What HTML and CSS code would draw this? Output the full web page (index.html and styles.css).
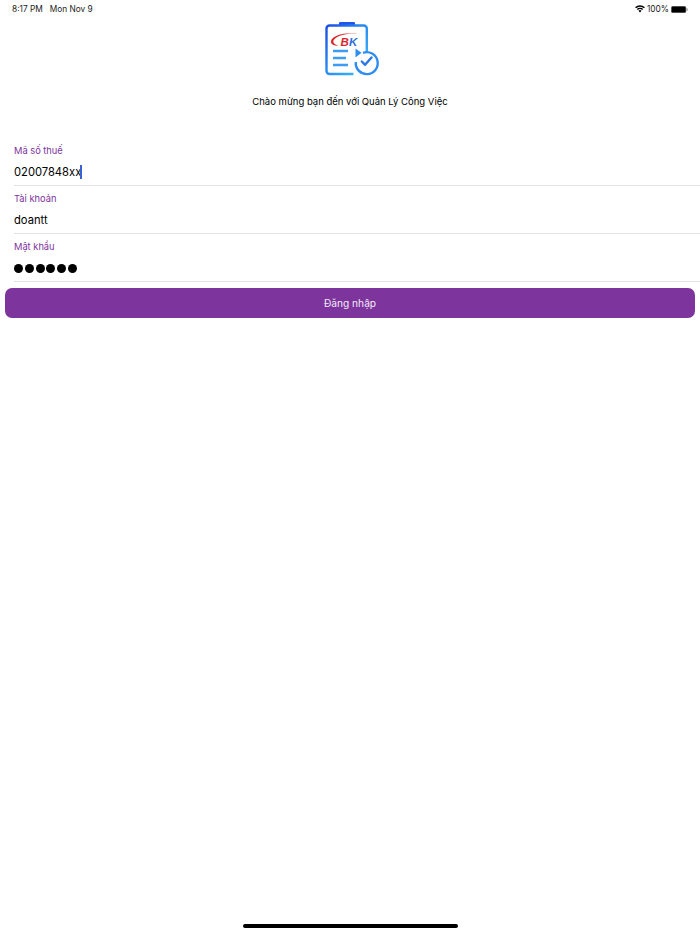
FILE: index.html
```html
<!DOCTYPE html>
<html lang="vi">
<head>
<meta charset="utf-8">
<title>Quản Lý Công Việc</title>
<link rel="stylesheet" href="styles.css">
</head>
<body>
<div class="screen">
  <header class="status">
    <div class="status-left"><span>8:17 PM</span><span>Mon Nov 9</span></div>
    <div class="status-right">
      <svg class="wifi" viewBox="0 0 12 9" width="10" height="7.500"><path d="M6 9 4.200 7a2.600 2.600 0 0 1 3.600 0Z" fill="#000"/><path d="M3.300 6 2.200 4.800a5.400 5.400 0 0 1 7.600 0L8.700 6a3.900 3.900 0 0 0-5.400 0Z" fill="#000"/><path d="M1.300 3.900.1 2.700a8.400 8.400 0 0 1 11.800 0l-1.200 1.200a6.700 6.700 0 0 0-9.400 0Z" fill="#000"/></svg>
      <span>100%</span>
      <svg class="battery" viewBox="0 0 17 7" width="17" height="7"><rect x=".3" y=".3" width="14.600" height="6.400" rx="1.500" fill="#000" stroke="#666" stroke-width=".5"/><rect x="15.400" y="2.300" width="1.200" height="2.400" rx=".5" fill="#888"/></svg>
    </div>
  </header>
  <div class="logo-wrap">
    <svg class="logo" viewBox="0 0 60 60" width="60" height="60">
      <defs>
        <linearGradient id="g" x1="0" y1="0" x2="1" y2="1"><stop offset="0" stop-color="#1b4fe4"/><stop offset=".5" stop-color="#2a8ff2"/><stop offset="1" stop-color="#3cc0f8"/></linearGradient>
      </defs>
      <rect x="17" y="2" width="16" height="4" rx="1" fill="#1f55e8"/>
      <path d="M44.800 32V8.500a3 3 0 0 0-3-3H7.500a3 3 0 0 0-3 3v42.500a3 3 0 0 0 3 3h24" fill="#fff" stroke="url(#g)" stroke-width="2.400"/>
      <path d="M17 26c-6-.5-8.500-2-8-5 1-5 12-9 27-7.500-11-.5-22 2-24.500 7-.8 2 1 4 5.500 5.500Z" fill="#d8262c"/>
      <text x="18.500" y="25.700" class="logo-b">B</text>
      <text x="27" y="25.700" class="logo-k">K</text>
      <path class="logo-lines" d="M11 31h15M11 38h13M11 45h15"/>
      <path class="logo-ring" d="M41 32.800A11 11 0 1 1 33.800 42"/>
      <path class="logo-check" d="M39.800 41.500l3.300 3.300 6.400-7.300"/>
      <path class="logo-arrow" d="M33.500 28.500l6 4.300-6 4.700Z"/>
    </svg>
  </div>
  <p class="welcome">Chào mừng bạn đến với Quản Lý Công Việc</p>
  <form class="form">
    <div class="field">
      <label class="label">Mã số thuế</label>
      <div class="value">02007848xx<span class="caret"></span></div>
    </div>
    <div class="field">
      <label class="label">Tài khoản</label>
      <div class="value">doantt</div>
    </div>
    <div class="field">
      <label class="label">Mật khẩu</label>
      <div class="dots"><i></i><i></i><i></i><i></i><i></i><i></i></div>
    </div>
    <button class="submit" type="button">Đăng nhập</button>
  </form>
  <div class="home-bar"></div>
</div>
</body>
</html>
```
FILE: styles.css
```css
* { box-sizing: border-box; }
html, body { margin: 0; padding: 0; background: #fff; }
body { font-family: Inter, "Liberation Sans", sans-serif; color: #000; }
.screen { width: 700px; height: 934px; display: flex; flex-direction: column; overflow: hidden; }
.status { height: 20px; padding: 3px 0 0 12px; display: flex; justify-content: space-between; align-items: flex-start; font-size: 8.300px; line-height: 11px; color: #1a1a1a; }
.status-left { display: flex; gap: 7px; padding-top: 1px; }
.status-right { display: flex; align-items: center; gap: 2px; padding-right: 12px; height: 11px; padding-top: 1px; }
.wifi { display: block; }
.battery { display: block; }
.logo-wrap { display: flex; justify-content: center; height: 72px; padding-left: 4px; }
.logo { display: block; }
.logo-b, .logo-k { font: italic 700 11.500px "Liberation Sans", sans-serif; }
.logo-b { fill: #d8262c; }
.logo-k { fill: #2a6fd8; }
.logo-lines { fill: none; stroke: #3d9cf3; stroke-width: 2.600; }
.logo-ring { fill: none; stroke: #2f8df2; stroke-width: 2.400; }
.logo-check { fill: none; stroke: #2a78e8; stroke-width: 2.400; stroke-linecap: round; stroke-linejoin: round; }
.logo-arrow { fill: #2f8df2; }
.welcome { margin: 2px 0 0; height: 16px; font-size: 9.500px; line-height: 16px; text-align: center; }
.form { margin-top: 28px; display: flex; flex-direction: column; }
.field { height: 48px; margin-left: 14px; border-bottom: 1px solid #e2e2e2; display: flex; flex-direction: column; }
.label { font-size: 9.300px; line-height: 14px; height: 14px; margin-top: 6px; color: #7e349d; }
.value { font-size: 11.200px; line-height: 18px; height: 18px; margin-top: 5px; display: flex; align-items: center; }
.caret { width: 2px; height: 14px; margin-left: -1px; background: #3a62d8; }
.dots { display: flex; gap: 1.800px; height: 18px; margin-top: 5px; align-items: center; }
.dots i { width: 9px; height: 9px; border-radius: 50%; background: #000; }
.submit { display: block; width: 690px; height: 30px; margin: 6px 5px 0; border: 0; border-radius: 7px; background: #7e349d; color: #f3e9f7; font: 400 10.200px/30px Inter, "Liberation Sans", sans-serif; padding: 0; text-align: center; }
.home-bar { width: 215px; height: 4px; border-radius: 2px; background: #000; margin: auto auto 6px; }
```
